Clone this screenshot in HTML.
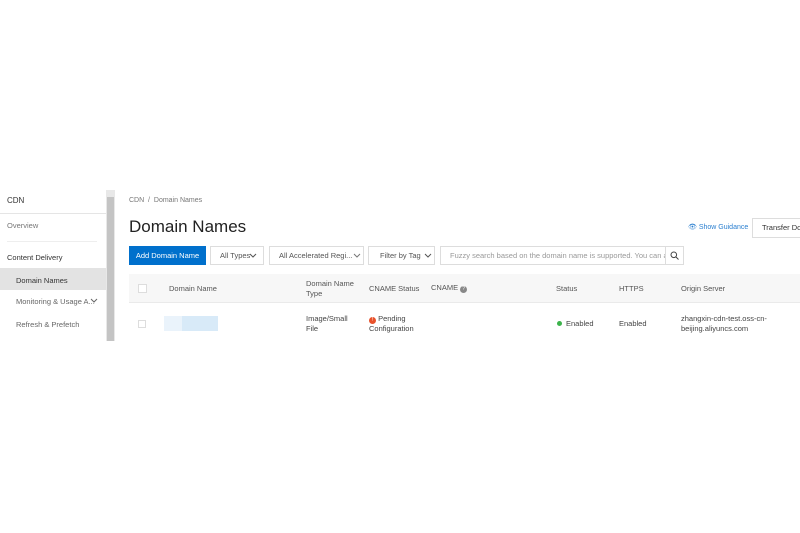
<!DOCTYPE html><html><head><style>
body{margin:0;width:800px;height:533px;background:#fff;font-family:"Liberation Sans",sans-serif;color:#333;position:relative;overflow:hidden;font-size:7.5px}
.a{position:absolute;white-space:nowrap}
.btn{position:absolute;height:19px;border:1px solid #ddd;box-sizing:border-box;background:#fff;line-height:17px;color:#555;font-size:7.5px;white-space:nowrap;overflow:hidden}
.btn svg{position:absolute;top:6px}
</style></head><body>
<div class="a" style="left:7px;top:196px;font-size:8px;color:#333">CDN</div>
<div class="a" style="left:0;top:213px;width:106px;height:1px;background:#e5e5e5"></div>
<div class="a" style="left:7px;top:221px;color:#777">Overview</div>
<div class="a" style="left:7px;top:241px;width:90px;height:1px;background:#eee"></div>
<div class="a" style="left:7px;top:253px;color:#333">Content Delivery</div>
<div class="a" style="left:0;top:268px;width:106px;height:22px;background:#e3e3e3"></div>
<div class="a" style="left:16px;top:276px;color:#333">Domain Names</div>
<div class="a" style="left:16px;top:297px;color:#666">Monitoring &amp; Usage A...</div>
<svg class="a" style="left:90px;top:298px" width="8" height="6"><path d="M1 1l3 3 3-3" stroke="#666" fill="none"/></svg>
<div class="a" style="left:16px;top:320px;color:#666">Refresh &amp; Prefetch</div>
<div class="a" style="left:106px;top:190px;width:9px;height:151px;background:#e8e8e8"></div>
<div class="a" style="left:107px;top:197px;width:7px;height:144px;background:#c4c4c4"></div>

<div class="a" style="left:129px;top:197px;color:#777;font-size:7px">CDN &nbsp;/&nbsp; Domain Names</div>
<div class="a" style="left:129px;top:217px;font-size:17px;color:#222">Domain Names</div>
<div class="a" style="left:688px;top:223px;color:#2a7fd0;font-size:7px">👁 Show Guidance</div>
<div class="btn" style="left:752px;top:218px;width:60px;height:20px;padding-left:9px;color:#333;line-height:18px">Transfer Domain</div>

<div class="btn" style="left:129px;top:246px;width:77px;background:#0070cc;border-color:#0070cc;color:#fff;text-align:center">Add Domain Name</div>
<div class="btn" style="left:210px;top:246px;width:54px;padding-left:9px">All Types<svg style="left:38px" width="8" height="6"><path d="M1 1l3 3 3-3" stroke="#555" fill="none"/></svg></div>
<div class="btn" style="left:269px;top:246px;width:95px;padding-left:9px">All Accelerated Regi...<svg style="left:83px" width="8" height="6"><path d="M1 1l3 3 3-3" stroke="#777" fill="none"/></svg></div>
<div class="btn" style="left:368px;top:246px;width:67px;padding-left:11px">Filter by Tag<svg style="left:55px" width="8" height="6"><path d="M1 1l3 3 3-3" stroke="#555" fill="none"/></svg></div>
<div class="btn" style="left:440px;top:246px;width:226px;padding-left:9px;color:#999">Fuzzy search based on the domain name is supported. You can also s</div>
<div class="btn" style="left:665px;top:246px;width:19px;text-align:center"><svg style="left:4px;top:4px" width="9" height="9"><circle cx="3.8" cy="3.8" r="2.8" stroke="#444" fill="none"/><path d="M6 6l2.5 2.5" stroke="#444"/></svg></div>

<div class="a" style="left:129px;top:274px;width:671px;height:28px;background:#f7f7f7;border-bottom:1px solid #eaeaea"></div>
<div class="a" style="left:138px;top:284px;width:7px;height:7px;border:1px solid #ddd;background:#fff"></div>
<div class="a" style="left:169px;top:284px;color:#555">Domain Name</div>
<div class="a" style="left:306px;top:279px;color:#555;line-height:10px">Domain Name<br>Type</div>
<div class="a" style="left:369px;top:284px;color:#555">CNAME Status</div>
<div class="a" style="left:431px;top:283px;color:#555">CNAME <span style="display:inline-block;width:7px;height:7px;border-radius:50%;background:#888;color:#fff;font-size:5px;text-align:center;line-height:7px">?</span></div>
<div class="a" style="left:556px;top:284px;color:#555">Status</div>
<div class="a" style="left:619px;top:284px;color:#555">HTTPS</div>
<div class="a" style="left:681px;top:284px;color:#555">Origin Server</div>

<div class="a" style="left:138px;top:320px;width:6px;height:6px;border:1px solid #ddd"></div>
<div class="a" style="left:164px;top:316px;width:54px;height:15px;background:#d8eaf8"></div>
<div class="a" style="left:164px;top:316px;width:18px;height:15px;background:#eaf3fb"></div>
<div class="a" style="left:306px;top:314px;color:#444;line-height:10px">Image/Small<br>File</div>
<div class="a" style="left:369px;top:314px;color:#444;line-height:10px"><span style="display:inline-block;width:7px;height:7px;border-radius:50%;background:#e8512a;color:#fff;font-size:5px;text-align:center;line-height:7px">!</span> Pending<br>Configuration</div>
<div class="a" style="left:557px;top:321px;width:5px;height:5px;border-radius:50%;background:#3cb34b"></div>
<div class="a" style="left:566px;top:319px;color:#444">Enabled</div>
<div class="a" style="left:619px;top:319px;color:#444">Enabled</div>
<div class="a" style="left:681px;top:314px;color:#444;line-height:10px">zhangxin-cdn-test.oss-cn-<br>beijing.aliyuncs.com</div>
</body></html>
